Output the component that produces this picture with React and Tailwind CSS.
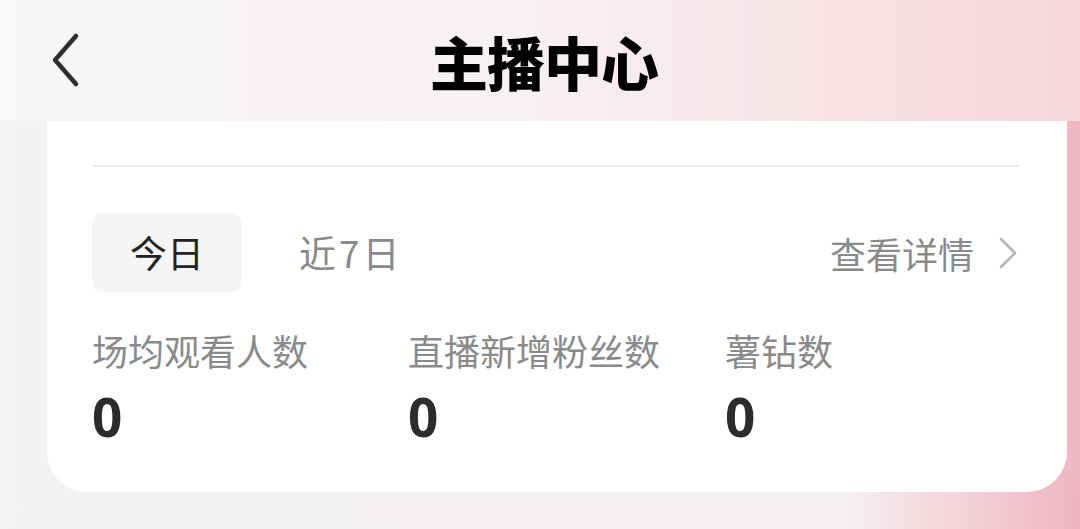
import React from 'react';

const cjk = { fontFamily: '"Noto Sans CJK SC", "Noto Sans", sans-serif' };

function Stat({ label, value }) {
    return (
        <div className="flex flex-col">
            <span className="text-[36px] leading-none text-[#8a8a8a]">{label}</span>
            <span className="mt-[22px] text-[53px] font-bold leading-none text-[#2c2c2c]" style={{ fontFamily: '"Noto Sans", sans-serif' }}>
                {value}
            </span>
        </div>
    );
}

export default function App() {
    return (
        <div
            className="w-[1080px] h-[529px] overflow-hidden bg-linear-to-r from-[#f4f3f1] via-[#f5f1f1] via-78% to-[#efb4c3]"
            style={cjk}
        >
            {/* header */}
            <div className="relative h-[121px] flex items-center justify-center bg-linear-to-r from-[#f8f8f8] via-[#f8f0f1] via-50% to-[#f6d8de]">
                <button className="absolute left-[46px] top-[30px] w-[40px] h-[60px] flex items-center justify-center">
                    <svg width="30" height="56" viewBox="0 0 30 56" fill="none">
                        <path d="M25 4 L4 28 L25 52" stroke="#2e2e2e" strokeWidth="4.5" strokeLinecap="round" strokeLinejoin="round" />
                    </svg>
                </button>
                <h1 className="text-[58px] font-black leading-none text-black tracking-[-1px] ml-[8px]">主播中心</h1>
            </div>

            <div className="flex bg-linear-to-r from-transparent via-transparent via-98% to-[#efb6c4]">
                <div className="ml-[47px] w-[1020px] h-[371px] bg-white rounded-b-[40px] pl-[45px] pr-[47px] pt-[44px]">
                    <div className="h-[2px] bg-[#ececec]" />

                    <div className="mt-[46px] flex items-center h-[79px]">
                        <div className="w-[150px] h-[79px] rounded-[10px] bg-[#f5f5f5] flex items-center justify-center text-[37px] text-[#222]">
                            今日
                        </div>
                        <span className="ml-[57px] text-[37px] tracking-[3px] text-[#8a8a8a]">近7日</span>
                        <div className="ml-auto flex items-center text-[36px] text-[#8a8a8a]">
                            查看详情
                            <svg className="ml-[24px] mr-[2px]" width="20" height="34" viewBox="0 0 20 34" fill="none">
                                <path d="M3 3 L17 17 L3 31" stroke="#b4b4b4" strokeWidth="2.5" strokeLinecap="round" strokeLinejoin="round" />
                            </svg>
                        </div>
                    </div>

                    <div className="mt-[40px] grid grid-cols-[316px_317px_1fr]">
                        <Stat label="场均观看人数" value="0" />
                        <Stat label="直播新增粉丝数" value="0" />
                        <Stat label="薯钻数" value="0" />
                    </div>
                </div>
            </div>
        </div>
    );
}
